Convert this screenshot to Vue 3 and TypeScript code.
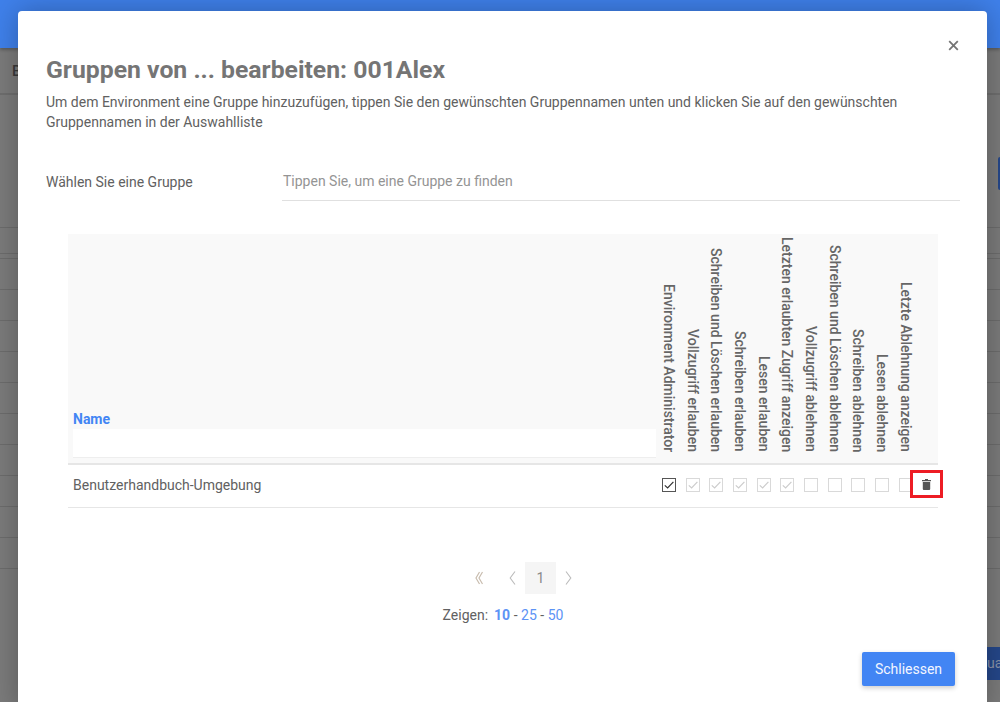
<script setup lang="ts">
const columns: string[] = [
  'Environment Administrator',
  'Vollzugriff erlauben',
  'Schreiben und Löschen erlauben',
  'Schreiben erlauben',
  'Lesen erlauben',
  'Letzten erlaubten Zugriff anzeigen',
  'Vollzugriff ablehnen',
  'Schreiben und Löschen ablehnen',
  'Schreiben ablehnen',
  'Lesen ablehnen',
  'Letzte Ablehnung anzeigen',
]
const states: string[] = ['on', 'dis', 'dis', 'dis', 'dis', 'dis', 'off', 'off', 'off', 'off', 'off']
const bgRows: number[] = Array.from({ length: 13 }, (_, i) => i)
</script>

<template>
  <div class="page">
    <div class="back">
      <div class="topbar"></div>
      <div class="subbar"><span class="subletter">B</span></div>
      <div class="backbody">
        <div v-for="r in bgRows" :key="r" class="backrow"></div>
      </div>
      <div class="backbtn side"></div>
      <div class="backbtn low"><span>ua</span></div>
    </div>

    <section class="modal">
      <button class="close" aria-label="close">
        <svg width="11" height="11" viewBox="0 0 11 11"><path d="M1.2 1.2l8.6 8.6M9.8 1.2l-8.6 8.6" stroke="#757575" stroke-width="1.8" fill="none" /></svg>
      </button>
      <h1 class="title">Gruppen von ... bearbeiten: 001Alex</h1>
      <p class="intro">Um dem Environment eine Gruppe hinzuzufügen, tippen Sie den gewünschten Gruppennamen unten und klicken Sie auf den gewünschten Gruppennamen in der Auswahlliste</p>

      <div class="pick">
        <label class="picklabel">Wählen Sie eine Gruppe</label>
        <div class="pickinput">Tippen Sie, um eine Gruppe zu finden</div>
      </div>

      <div class="tablewrap">
        <div class="thead">
          <div class="namecol">
            <div class="namelabel">Name</div>
            <div class="namefilter"></div>
          </div>
          <div class="colheads">
            <div v-for="c in columns" :key="c" class="colhead"><span>{{ c }}</span></div>
          </div>
        </div>
        <div class="trow">
          <div class="rowname">Benutzerhandbuch-Umgebung</div>
          <div class="checks">
            <div v-for="(s, i) in states" :key="i" class="cell">
              <span class="box" :class="s">
                <svg v-if="s !== 'off'" width="12" height="12" viewBox="0 0 12 12"><path d="M1.8 6.4l2.8 2.6L10.4 2.8" fill="none" stroke-width="1.2" :stroke="s === 'on' ? '#333' : '#ccc'" /></svg>
              </span>
            </div>
          </div>
          <div class="trash">
            <svg width="9" height="11" viewBox="0 0 9 11"><path d="M3 0h3v1h3v1.2H0V1h3zM.8 3h7.4v7a1 1 0 0 1-1 1H1.8a1 1 0 0 1-1-1z" fill="#555" /></svg>
          </div>
        </div>
      </div>

      <div class="pager">
        <span class="pg first">
          <svg width="8" height="14" viewBox="0 0 8 14"><path d="M4.5 1L1 7l3.5 6M7.5 1L4 7l3.5 6" fill="none" stroke="#c8bcae" stroke-width="1.2" /></svg>
        </span>
        <span class="pg prev">
          <svg width="7" height="14" viewBox="0 0 7 14"><path d="M6 .5L1.2 7 6 13.5" fill="none" stroke="#bbb" stroke-width="1.1" /></svg>
        </span>
        <span class="current">1</span>
        <span class="pg next">
          <svg width="7" height="14" viewBox="0 0 7 14"><path d="M1 .5L5.8 7 1 13.5" fill="none" stroke="#bbb" stroke-width="1.1" /></svg>
        </span>
      </div>
      <div class="sizes">
        <span class="zeigen">Zeigen:</span>
        <b class="size">10</b><span class="dash">-</span><span class="size">25</span><span class="dash">-</span><span class="size">50</span>
      </div>

      <div class="footer">
        <button class="closebtn">Schliessen</button>
      </div>
    </section>
  </div>
</template>

<style>
html, body { margin: 0; background: #7b7b7b; overflow: hidden; }
</style>

<style scoped>
.page {
  position: relative;
  width: 1000px;
  height: 702px;
  overflow: hidden;
  font-family: Roboto, "Liberation Sans", sans-serif;
  color: #757575;
}
.back { height: 702px; background: #7b7b7b; display: flex; flex-direction: column; overflow: hidden; }
.topbar { flex: none; height: 48px; background: #3f80ea; box-shadow: 0 2px 3px rgba(0,0,0,.25); }
.subbar { flex: none; height: 45px; border-bottom: 2px solid #6e6e6e; display: flex; align-items: center; padding-left: 12px; }
.subletter { font-size: 15px; font-weight: 500; color: #3a3a3a; }
.backbody { flex: none; padding-top: 102px; }
.backrow { height: 30px; border-bottom: 1px solid #6c6c6c; }
.backrow:nth-child(2) { height: 25px; }
.backrow:nth-child(3) { height: 4px; }
.backbtn { position: absolute; background: #25478a; border-radius: 2px; }
.backbtn.side { left: 998px; top: 157px; width: 10px; height: 33px; }
.backbtn.low { left: 985px; top: 647px; width: 40px; height: 33px; color: #8a93a8; font-size: 14px; line-height: 33px; padding-left: 2px; }

.modal {
  position: absolute;
  left: 18px;
  top: 11px;
  width: 969px;
  height: 700px;
  box-sizing: border-box;
  padding: 42px 27px 0 28px;
  background: #fff;
  border-radius: 4px;
  box-shadow: 0 0 28px rgba(0,0,0,.28);
}
.close {
  position: absolute;
  right: 28px;
  top: 29px;
  width: 11px;
  height: 11px;
  padding: 0;
  border: 0;
  background: none;
  display: flex;
}
.title { margin: 1px 0 0; font-size: 24.75px; line-height: 32px; font-weight: 700; color: #757575; }
.intro { margin: 6px 0 0; font-size: 14px; line-height: 20px; color: #616161; max-width: 880px; }
.pick { display: flex; align-items: flex-start; margin-top: 29px; }
.picklabel { width: 236px; font-size: 14px; line-height: 20px; padding-top: 11px; color: #616161; }
.pickinput { flex: 1; height: 39px; padding-left: 1px; line-height: 41px; font-size: 14px; color: #949494; border-bottom: 1px solid #e0e0e0; }

.tablewrap { margin: 33px 22px 0 22px; }
.thead { display: flex; height: 229px; background: #f9f9f9; border-bottom: 2px solid #e6e6e6; }
.namecol { width: 583px; margin-left: 5px; display: flex; flex-direction: column; justify-content: flex-end; padding-bottom: 5px; }
.namelabel { font-size: 14px; font-weight: 700; color: #4285f4; line-height: 18px; margin-bottom: 1px; }
.namefilter { height: 28px; background: #fff; border-bottom: 1px solid #eee; }
.colheads { display: flex; margin-left: 1px; align-items: flex-end; padding-bottom: 11px; }
.colhead { width: 23.7px; display: flex; justify-content: center; }
.colhead span { writing-mode: vertical-rl; font-size: 14px; font-weight: 500; line-height: 16px; color: #666; white-space: nowrap; }
.trow { position: relative; display: flex; align-items: center; height: 40px; padding-bottom: 2px; border-bottom: 1px solid #e6e6e6; }
.rowname { width: 588px; padding-left: 5px; box-sizing: border-box; font-size: 14px; color: #616161; }
.checks { display: flex; margin-left: 1px; margin-top: -1px; }
.cell { width: 23.7px; display: flex; justify-content: center; }
.box { width: 14px; height: 14px; box-sizing: border-box; border: 1px solid #d9d9d9; display: flex; align-items: center; justify-content: center; background: #fff; }
.box.on { border-color: #555; }
.box svg { flex: none; }
.trash {
  position: absolute;
  left: 842px;
  top: 5px;
  width: 33px;
  height: 28px;
  box-sizing: border-box;
  border: 3px solid #ed1c24;
  background: #fff;
  display: flex;
  align-items: center;
  justify-content: center;
}

.pager { display: flex; align-items: center; height: 32px; margin-top: 54px; padding-left: 423px; }
.pg { display: flex; align-items: center; justify-content: center; }
.first { width: 20px; margin-right: 14px; }
.prev { width: 18px; margin-right: 4px; }
.current { width: 31px; height: 32px; background: #f5f5f5; color: #8a8a8a; font-size: 14px; line-height: 32px; text-align: center; }
.next { width: 24px; }
.sizes { display: flex; justify-content: center; align-items: center; margin-top: 11px; font-size: 14px; line-height: 20px; }
.zeigen { color: #616161; margin-right: 6px; }
.size { color: #5c93f5; }
.dash { margin: 0 3.5px; color: #616161; }
.footer { display: flex; justify-content: flex-end; margin-top: 27px; padding-right: 5px; }
.closebtn {
  width: 93px;
  height: 34px;
  border: 0;
  border-radius: 2px;
  background: #4285f4;
  color: #f2f6ff;
  font: 400 14px Roboto, sans-serif;
  box-shadow: 0 2px 5px rgba(0,0,0,.2);
}
</style>
